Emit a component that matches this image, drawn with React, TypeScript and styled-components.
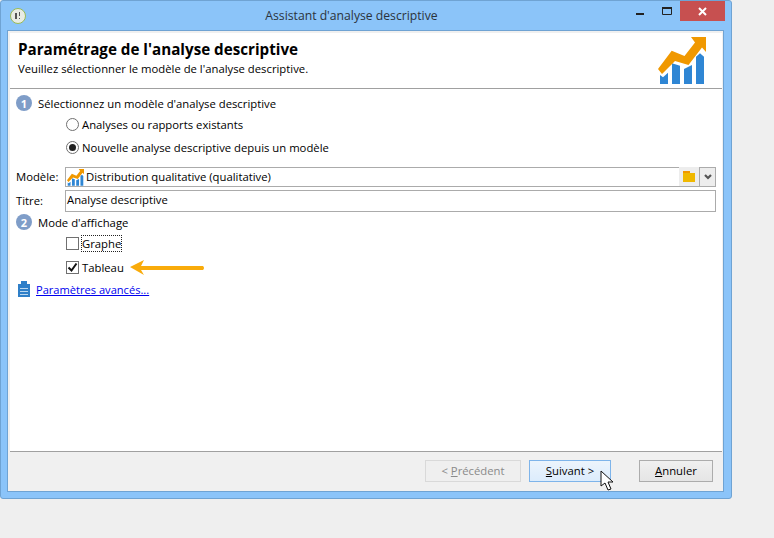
import React from 'react';
import styled, { createGlobalStyle } from 'styled-components';

const GlobalStyle = createGlobalStyle`
  html, body {
    margin: 0;
    padding: 0;
    background: #efefef;
    width: 774px;
    height: 538px;
    overflow: hidden;
  }
  body, button, input {
    font-family: "Open Sans", "Noto Sans", "Liberation Sans", sans-serif;
  }
`;

const Window = styled.div`
  box-sizing: border-box;
  width: 732px;
  height: 499px;
  background: #8bc4f9;
  border: 1px solid #6fa3d3;
  border-radius: 3px;
  display: flex;
  flex-direction: column;
  padding: 0 7px 6px 6px;
`;

const TitleBar = styled.div`
  height: 29px;
  flex: none;
  display: grid;
  grid-template-columns: 30px 1fr 128px;
  align-items: center;
`;

const AppIcon = styled.div`
  box-sizing: border-box;
  width: 16px;
  height: 16px;
  margin-left: 3px;
  border-radius: 50%;
  background: #e8ece4;
  border: 1px solid #9abb55;
  display: flex;
  align-items: center;
  justify-content: center;
`;

const TitleText = styled.div`
  font-size: 12.2px;
  color: #2b333c;
  text-align: center;
  padding-left: 70px;
`;

const WindowControls = styled.div`
  display: flex;
  align-items: flex-start;
  justify-content: flex-end;
  align-self: start;
  gap: 1px;
  margin-right: -1px;
`;

const ControlButton = styled.div`
  width: 26px;
  height: 20px;
  display: flex;
  align-items: center;
  justify-content: center;
`;

const CloseButton = styled.div`
  width: 45px;
  height: 20px;
  margin-left: -1px;
  background: #c75050;
  display: flex;
  align-items: center;
  justify-content: center;
`;

const Client = styled.div`
  flex: 1;
  min-height: 0;
  background: #f0f0f0;
  border: 1px solid #6fa3d3;
  display: flex;
  flex-direction: column;
  padding: 2px 1px 0 2px;
`;

const Panel = styled.div`
  flex: 1;
  min-height: 0;
  background: #fff;
  display: flex;
  flex-direction: column;
`;

const Header = styled.div`
  box-sizing: border-box;
  height: 56px;
  flex: none;
  border-bottom: 1px solid #a0a0a0;
  display: flex;
  justify-content: space-between;
  padding: 6px 16px 0 8px;
`;

const HeaderTitle = styled.div`
  font-size: 15.2px;
  font-weight: 700;
  color: #000;
  line-height: 21px;
`;

const HeaderSub = styled.div`
  font-size: 11.3px;
  color: #000;
  line-height: 18px;
`;

const HeaderIcon = styled.svg`
  margin-top: -2px;
`;

const Body = styled.div`
  flex: 1;
  padding: 5px 6px 0 6px;
  display: flex;
  flex-direction: column;
`;

const Step = styled.div<{ $mt?: number }>`
  display: flex;
  align-items: center;
  gap: 6px;
  height: 18px;
  margin-top: ${(p) => p.$mt ?? 0}px;
  font-size: 11.3px;
  color: #000;
`;

const StepBadge = styled.span`
  width: 16px;
  height: 16px;
  border-radius: 50%;
  background: #7f9dc8;
  color: #fff;
  font-size: 11px;
  font-weight: 700;
  display: flex;
  align-items: center;
  justify-content: center;
`;

const OptionRow = styled.div<{ $height: number }>`
  height: ${(p) => p.$height}px;
  display: flex;
  align-items: center;
  gap: 3px;
  padding-left: 50px;
  font-size: 11.3px;
  color: #000;
`;

const Radio = styled.span<{ $on?: boolean }>`
  box-sizing: border-box;
  width: 13px;
  height: 13px;
  border-radius: 50%;
  border: 1px solid #707070;
  background: #fff;
  display: flex;
  align-items: center;
  justify-content: center;

  &::after {
    content: '';
    display: ${(p) => (p.$on ? 'block' : 'none')};
    width: 7px;
    height: 7px;
    border-radius: 50%;
    background: #222;
  }
`;

const Check = styled.span`
  box-sizing: border-box;
  width: 13px;
  height: 13px;
  border: 1px solid #707070;
  background: #fff;
  display: flex;
  align-items: center;
  justify-content: center;
`;

const Focused = styled.span`
  outline: 1px dotted #222;
  line-height: 15px;
`;

const FieldRow = styled.div<{ $mt: number }>`
  display: grid;
  grid-template-columns: 49px 1fr;
  align-items: center;
  margin-top: ${(p) => p.$mt}px;
  font-size: 11.3px;
  color: #000;
`;

const FieldBox = styled.div`
  box-sizing: border-box;
  height: 22px;
  border: 1px solid #ababab;
  display: flex;
  align-items: center;
  gap: 2px;
  padding: 0 0 3px 1px;
  background: #fff;
  font-size: 11.3px;
`;

const ComboBox = styled(FieldBox)`
  flex: 1;
  height: 20px;
  padding: 0 0 0 1px;
  border-right: none;
`;

const ComboText = styled.span`
  margin-top: -2px;
`;

const ComboRow = styled.div`
  display: flex;
  align-items: flex-start;
`;

const FolderButton = styled.div`
  width: 20px;
  height: 20px;
  background: #ededed;
  border-bottom: 1px solid #ababab;
  box-sizing: border-box;
  display: flex;
  align-items: center;
  justify-content: center;
`;

const DropButton = styled.div`
  box-sizing: border-box;
  width: 17px;
  height: 20px;
  background: #ededed;
  border: 1px solid #ababab;
  display: flex;
  align-items: center;
  justify-content: center;
`;

const ArrowWrap = styled.span`
  margin-left: 3px;
  display: flex;
`;

const LinkRow = styled.div`
  display: flex;
  align-items: center;
  gap: 6px;
  margin-top: 1px;
  padding-left: 2px;
  height: 18px;
`;

const Link = styled.a`
  font-size: 11.1px;
  color: #0000ee;
  text-decoration: underline;
`;

const Footer = styled.div`
  height: 40px;
  flex: none;
  border-top: 1px solid #a0a0a0;
  background: #f0f0f0;
  display: flex;
  justify-content: flex-end;
  align-items: flex-start;
  box-sizing: border-box;
  padding: 8px 9px 0 0;
`;

const Button = styled.div<{ $kind?: 'disabled' | 'hover' }>`
  box-sizing: border-box;
  width: ${(p) => (p.$kind === 'hover' ? 82 : p.$kind === 'disabled' ? 96 : 74)}px;
  height: 22px;
  margin-left: ${(p) => (p.$kind === 'hover' ? 8 : p.$kind === 'disabled' ? 0 : 28)}px;
  padding-bottom: 2px;
  display: flex;
  align-items: center;
  justify-content: center;
  font-size: 11.3px;
  position: relative;
  color: ${(p) => (p.$kind === 'disabled' ? '#8a8a8a' : '#000')};
  border: 1px solid
    ${(p) => (p.$kind === 'hover' ? '#7eb4ea' : p.$kind === 'disabled' ? '#d9d9d9' : '#acacac')};
  background: ${(p) =>
    p.$kind === 'hover'
      ? 'linear-gradient(#ecf4fc, #dcecfc)'
      : p.$kind === 'disabled'
        ? '#efefef'
        : 'linear-gradient(#f0f0f0, #e5e5e5)'};
`;

const Cursor = styled.svg`
  position: absolute;
  left: 70px;
  top: 9px;
`;

// same drawing at two sizes, header and combo box
const ChartIcon = () => (
  <>
    <path
      d="M2 47V38l3 2.300 5-4.600V47zM14 47V26.300L22 28.700V47zM26 47V32l8-4v19zM38 47V19.700L42 16.300 46 19.700V47z"
      fill="#2f86d4"
    />
    <path d="M0 32L13.700 13.700 26.500 19 37 5.500 33 0H48V15L44 10.500 30.500 28 17 24 4 37z" fill="#f09800" />
  </>
);

const App: React.FC = () => (
  <>
    <GlobalStyle />
    <Window>
      <TitleBar>
        <AppIcon>
          <svg width="10" height="10" viewBox="0 0 10 10">
            <path d="M2 2h2v6H2zM6 1h1v4H6zM6 7h1v1H6z" fill="#555" />
          </svg>
        </AppIcon>
        <TitleText>Assistant d'analyse descriptive</TitleText>
        <WindowControls>
          <ControlButton>
            <svg width="10" height="10" viewBox="0 0 10 10">
              <path d="M1 7h8v2H1z" fill="#222" />
            </svg>
          </ControlButton>
          <ControlButton>
            <svg width="10" height="10" viewBox="0 0 10 10">
              <path d="M.5 1.500h9v7h-9z" fill="none" stroke="#222" />
              <path d="M0 1h10v2H0z" fill="#222" />
            </svg>
          </ControlButton>
          <CloseButton>
            <svg width="9" height="9" viewBox="0 0 9 9">
              <path d="M1 1l7 7M8 1l-7 7" stroke="#fff" strokeWidth="2" />
            </svg>
          </CloseButton>
        </WindowControls>
      </TitleBar>
      <Client>
        <Panel>
          <Header>
            <div>
              <HeaderTitle>Paramétrage de l'analyse descriptive</HeaderTitle>
              <HeaderSub>Veuillez sélectionner le modèle de l'analyse descriptive.</HeaderSub>
            </div>
            <HeaderIcon width="48" height="48" viewBox="0 0 48 48">
              <ChartIcon />
            </HeaderIcon>
          </Header>
          <Body>
            <Step>
              <StepBadge>1</StepBadge>
              Sélectionnez un modèle d'analyse descriptive
            </Step>
            <OptionRow $height={24}>
              <Radio />
              Analyses ou rapports existants
            </OptionRow>
            <OptionRow $height={23}>
              <Radio $on />
              Nouvelle analyse descriptive depuis un modèle
            </OptionRow>
            <FieldRow $mt={8}>
              <ComboText>Modèle:</ComboText>
              <ComboRow>
                <ComboBox>
                  <svg width="17" height="17" viewBox="0 0 48 48">
                    <ChartIcon />
                  </svg>
                  <ComboText>Distribution qualitative (qualitative)</ComboText>
                </ComboBox>
                <FolderButton>
                  <svg width="12" height="12" viewBox="0 0 12 12">
                    <path d="M0 0h7v2H0z" fill="#f09800" />
                    <path d="M0 2h12v9H0z" fill="#f0b800" />
                  </svg>
                </FolderButton>
                <DropButton>
                  <svg width="8" height="6" viewBox="0 0 8 6">
                    <path d="M1 1l3 3 3-3" fill="none" stroke="#555" strokeWidth="2.200" />
                  </svg>
                </DropButton>
              </ComboRow>
            </FieldRow>
            <FieldRow $mt={3}>
              <ComboText>Titre:</ComboText>
              <FieldBox>Analyse descriptive</FieldBox>
            </FieldRow>
            <Step $mt={1}>
              <StepBadge>2</StepBadge>
              Mode d'affichage
            </Step>
            <OptionRow $height={24}>
              <Check />
              <Focused>Graphe</Focused>
            </OptionRow>
            <OptionRow $height={24}>
              <Check>
                <svg width="11" height="11" viewBox="0 0 11 11">
                  <path d="M1.500 5.500l3 3 5-7" fill="none" stroke="#111" strokeWidth="2" />
                </svg>
              </Check>
              Tableau
              <ArrowWrap>
                <svg width="75" height="15" viewBox="0 0 75 15">
                  <path d="M0 7L14 0L11 6L73 6Q75 8 73 10L11 10L14 15z" fill="#f9ab0a" />
                </svg>
              </ArrowWrap>
            </OptionRow>
            <LinkRow>
              <svg width="12" height="16" viewBox="0 0 12 16">
                <path d="M0 3h12v13H0z" fill="#2f7fc8" />
                <path d="M3 0h6v4H3z" fill="#2f7fc8" />
                <path d="M2 7h8v1H2zM2 10h8v1H2zM2 13h8v1H2z" fill="#bcd8f0" />
              </svg>
              <Link>Paramètres avancés...</Link>
            </LinkRow>
          </Body>
          <Footer>
            <Button $kind="disabled">
              <span>
                &lt; <u>P</u>récédent
              </span>
            </Button>
            <Button $kind="hover">
              <span>
                <u>S</u>uivant &gt;
              </span>
              <Cursor width="14" height="21" viewBox="0 0 14 21">
                <path d="M1 1v15l4-3 3 7 3-1-3-7h5z" fill="#fff" stroke="#111" strokeWidth="1" />
              </Cursor>
            </Button>
            <Button>
              <span>
                <u>A</u>nnuler
              </span>
            </Button>
          </Footer>
        </Panel>
      </Client>
    </Window>
  </>
);

export default App;
